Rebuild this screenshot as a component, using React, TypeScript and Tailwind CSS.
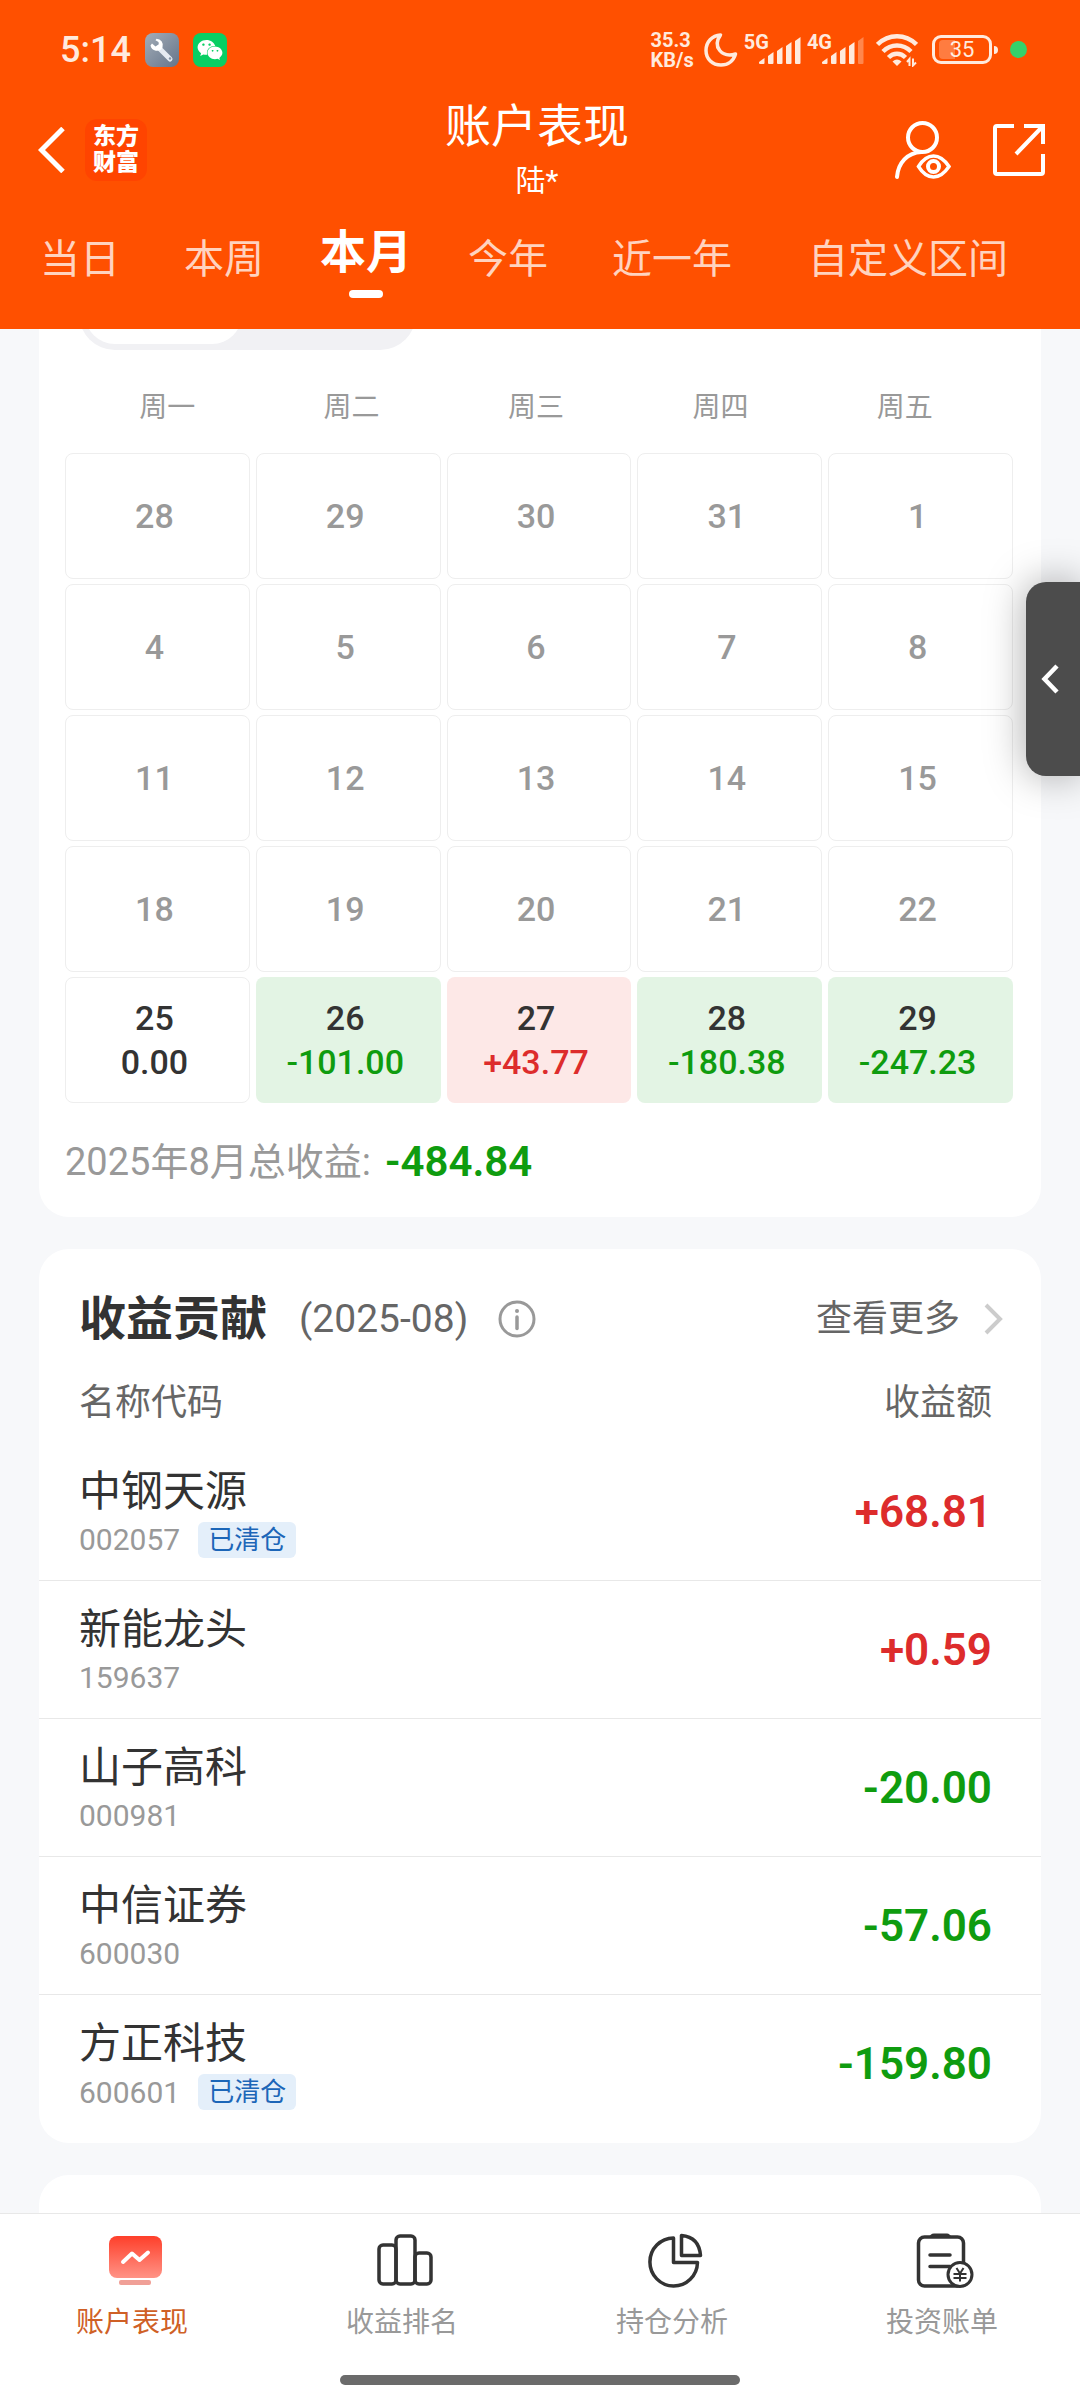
import { useState } from "react"
import type { ReactNode } from "react"
import clsx from "clsx"
import { FaWeixin } from "react-icons/fa"

const tabs = ["当日", "本周", "本月", "今年", "近一年", "自定义区间"]

const weekdays = ["周一", "周二", "周三", "周四", "周五"]

type Day = { day: number; profit?: string }

const days: Day[] = [
  ...[28, 29, 30, 31, 1, 4, 5, 6, 7, 8, 11, 12, 13, 14, 15, 18, 19, 20, 21, 22].map((day) => ({ day })),
  { day: 25, profit: "0.00" },
  { day: 26, profit: "-101.00" },
  { day: 27, profit: "+43.77" },
  { day: 28, profit: "-180.38" },
  { day: 29, profit: "-247.23" },
]

const stocks = [
  { name: "中钢天源", code: "002057", profit: "+68.81", closed: true },
  { name: "新能龙头", code: "159637", profit: "+0.59", closed: false },
  { name: "山子高科", code: "000981", profit: "-20.00", closed: false },
  { name: "中信证券", code: "600030", profit: "-57.06", closed: false },
  { name: "方正科技", code: "600601", profit: "-159.80", closed: true },
]

function profitColor(value: string) {
  if (value.startsWith("+")) return "text-[#dd2c2c]"
  if (value.startsWith("-")) return "text-[#0f9c0f]"
  return "text-[#333]"
}

function Signal({ label, level }: { label: string; level: number }) {
  const heights = [6, 12, 17, 22, 27]
  return (
    <div className="flex h-8 items-end">
      <span className="-mr-2.5 self-start text-[20px] leading-4 font-bold">{label}</span>
      <svg width="42" height="30" viewBox="0 0 42 30" fill="currentColor">
        {heights.map((h, i) => (
          <path
            key={h}
            d={`M${i * 9} ${28 - h + 4}l5.500 -4v${h - 1}q0 1 -1 1h-3.500q-1 0 -1 -1z`}
            opacity={i < level ? 1 : 0.35}
          />
        ))}
      </svg>
    </div>
  )
}

function StatusBar() {
  return (
    <div className="flex h-[99px] items-center justify-between pr-[53px] pl-[60px] text-[#ffeadd]">
      <div className="flex items-center gap-3.5">
        <span className="text-[36px] leading-none font-medium">5:14</span>
        <div className="flex size-[34px] items-center justify-center rounded-lg bg-gradient-to-br from-[#a3adb8] to-[#66758a]">
          <svg width="26" height="26" viewBox="0 0 26 26">
            <path d="M11 12L21 22" stroke="#e6ebf2" strokeWidth="5" strokeLinecap="round" />
            <path
              d="M7.500 1.800A6.500 6.500 0 0 1 13.500 10.500A6.500 6.500 0 0 1 1.500 8.500L3 6.500L6.500 9.500L9.800 7.200L9.500 5L6.500 3.200Z"
              fill="#fff"
            />
            <circle cx="21" cy="21.500" r="1.200" fill="#8493a5" />
          </svg>
        </div>
        <div className="flex size-[34px] items-center justify-center rounded-lg bg-[#07cf63] text-white">
          <FaWeixin className="size-[26px]" />
        </div>
      </div>

      <div className="flex items-center">
        <div className="mr-2.5 text-[20px] leading-5 font-bold">
          <div>35.3</div>
          <div>KB/s</div>
        </div>
        <svg className="mr-1.5" width="34" height="34" viewBox="0 0 34 34" fill="none" stroke="currentColor" strokeWidth="3.500" strokeLinejoin="round">
          <path d="M16.500 2C8 2.500 2 9 2 17.500C2 26 8.500 32 17 32C24 32 29.500 28 31.500 21C18 25 8 14 16.500 2Z" />
        </svg>
        <div className="mr-3 flex gap-1.5">
          <Signal label="5G" level={5} />
          <Signal label="4G" level={4} />
        </div>
        <svg className="mr-3.5" width="42" height="34" viewBox="0 0 42 34" fill="none" stroke="currentColor" strokeWidth="4.500">
          <path d="M1.500 11.500C12.500 0.500 29.500 0.500 40.500 11.500" />
          <path d="M7 18.500C15 10.500 27 10.500 35 18.500" />
          <path d="M12.500 24.500C17.500 19.500 24.500 19.500 29.500 24.500" />
          <path d="M21 33L16.500 28.500Q21 24.500 25.500 28.500Z" fill="currentColor" stroke="none" />
          <path d="M33.500 33V26L31 29M37 25.500V32.500L40 29.500" strokeWidth="2" />
        </svg>
        <div className="flex items-center gap-0.5">
          <div className="relative flex h-[29px] w-[60px] items-center justify-center rounded-[9px] border-[3px] border-current">
            <div className="absolute inset-y-0.5 left-1 w-4 rounded-l-sm bg-white/25" />
            <span className="text-[22px] leading-none">35</span>
          </div>
          <div className="h-2 w-1 rounded-r bg-current" />
        </div>
        <div className="ml-3 size-[17px] rounded-full bg-[#35d26a]" />
      </div>
    </div>
  )
}

function Header() {
  const [active, setActive] = useState("本月")

  return (
    <header className="bg-[#ff5000] text-white">
      <StatusBar />

      <div className="grid h-[102px] grid-cols-[1fr_auto_1fr] items-center pr-[34px] pl-[38px]">
        <div className="flex items-center gap-5">
          <button type="button" aria-label="返回">
            <svg width="27" height="46" viewBox="0 0 27 46" fill="none" stroke="currentColor" strokeWidth="5">
              <path d="M25 1.500L3.500 23L25 44.500" />
            </svg>
          </button>
          <div className="flex size-[62px] flex-col items-center justify-center rounded-xl bg-[#ff4400] text-[23px] leading-[26px] font-black">
            <span>东方</span>
            <span>财富</span>
          </div>
        </div>
        <div className="pr-2.5 text-center">
          <h1 className="text-[46px] leading-[54px]">账户表现</h1>
          <p className="mt-2 text-[30px] leading-10">陆*</p>
        </div>
        <div className="flex items-center justify-end gap-10">
          <button type="button" aria-label="隐私设置">
            <svg width="58" height="58" viewBox="0 0 58 58" fill="none" stroke="currentColor" strokeWidth="4" strokeLinecap="round">
              <circle cx="28.500" cy="16.500" r="14.500" />
              <path d="M3 56C4 42 13.500 31.500 27.500 31" />
              <path d="M24.500 45.500Q31 35 39.500 35T55 45.500Q48 56 39.500 56T24.500 45.500Z" strokeWidth="3.500" />
              <circle cx="39.500" cy="45.500" r="5.500" />
            </svg>
          </button>
          <button type="button" aria-label="分享">
            <svg width="54" height="54" viewBox="0 0 54 54" fill="none" stroke="currentColor" strokeWidth="4">
              <path d="M22 3H5Q3 3 3 5V49Q3 51 5 51H49Q51 51 51 49V31" />
              <path d="M32 3H51V21M24 31L51 3" />
            </svg>
          </button>
        </div>
      </div>

      <nav className="flex h-32 items-start pt-px pl-2 whitespace-nowrap">
        {tabs.map((tab) => (
          <button
            key={tab}
            type="button"
            onClick={() => setActive(tab)}
            className={clsx(
              "flex flex-col items-center leading-[60px]",
              tab === active ? "px-6 pt-5 text-[46px] font-bold" : "px-8 pt-7 text-[40px] text-white/75",
              tab === "自定义区间" && "ml-3",
            )}
          >
            {tab}
            {tab === active && <span className="mt-2 h-2 w-[34px] rounded-full bg-white" />}
          </button>
        ))}
      </nav>
    </header>
  )
}

function CalendarCard() {
  return (
    <section className="rounded-b-[30px] bg-white pr-7 pb-7 pl-[26px]">
      {/* 视图切换滑块，上半部分滚动到标题栏下方 */}
      <div className="flex h-[21px] items-end overflow-hidden pl-3.5">
        <div className="flex h-[72px] w-[337px] shrink-0 rounded-full bg-[#f1f1f4] p-1.5">
          <div className="w-[157px] rounded-full bg-white" />
        </div>
      </div>

      <div className="mt-[38px] grid grid-cols-5 pr-4 pl-2.5 text-center text-[28px] leading-10 text-[#999]">
        {weekdays.map((name) => (
          <div key={name}>{name}</div>
        ))}
      </div>

      <div className="mt-[25px] grid grid-cols-5 gap-x-1.5 gap-y-[5px]">
        {days.map(({ day, profit }, i) => (
          <div
            key={i}
            className={clsx(
              "flex h-[126px] flex-col items-center justify-center rounded-lg pr-1.5 text-[34px] leading-11 font-medium",
              !profit && "border border-[#eee] text-[#999]",
              profit === "0.00" && "border border-[#eee] text-[#333]",
              profit?.startsWith("-") && "bg-[#e3f4e4] text-[#333]",
              profit?.startsWith("+") && "bg-[#fde8e7] text-[#333]",
            )}
          >
            <span>{day}</span>
            {profit && <span className={profitColor(profit)}>{profit}</span>}
          </div>
        ))}
      </div>

      <p className="mt-8 flex items-center leading-[54px]">
        <span className="text-[38px] text-[#999]">2025年8月总收益:</span>
        <span className="ml-3.5 text-[42px] font-semibold text-[#0f9c0f]">-484.84</span>
      </p>
    </section>
  )
}

function ContributionCard() {
  return (
    <section className="rounded-[30px] bg-white pt-[26px] pb-2.5">
      <div className="flex h-[88px] items-center justify-between pr-[38px] pl-10">
        <div className="flex items-center">
          <h2 className="text-[47px] font-bold text-[#333]">收益贡献</h2>
          <span className="ml-8 text-[39px] text-[#666]">(2025-08)</span>
          <button type="button" aria-label="说明" className="ml-[30px]">
            <svg width="38" height="38" viewBox="0 0 38 38" fill="none" stroke="#999" strokeWidth="3">
              <circle cx="19" cy="19" r="17" />
              <path d="M19 17V28.500" strokeWidth="3.500" strokeLinecap="round" />
              <circle cx="19" cy="11" r="2" fill="#999" stroke="none" />
            </svg>
          </button>
        </div>
        <a href="#more" className="flex items-center gap-6 text-[36px] text-[#666]">
          查看更多
          <svg width="19" height="32" viewBox="0 0 19 32" fill="none" stroke="#ccc" strokeWidth="4">
            <path d="M2 2L16 16L2 30" />
          </svg>
        </a>
      </div>

      <table className="w-full border-separate border-spacing-0">
        <thead>
          <tr className="h-20 text-[36px] text-[#666]">
            <th className="pl-10 text-left font-normal">名称代码</th>
            <th className="pr-[49px] text-right font-normal">收益额</th>
          </tr>
        </thead>
        <tbody className="[&>tr:not(:last-child)>td]:border-b [&>tr>td]:border-[#e8e8e8]">
          {stocks.map((stock) => (
            <tr key={stock.code} className="h-[138px]">
              <td className="pt-1 pl-10">
                <div className="text-[42px] leading-[52px] text-[#333]">{stock.name}</div>
                <div className="flex h-11 items-center gap-[18px]">
                  <span className="text-[30px] text-[#999]">{stock.code}</span>
                  {stock.closed && (
                    <span className="rounded-md bg-[#e4effa] px-2.5 text-[26px] leading-9 text-[#1c66b8]">已清仓</span>
                  )}
                </div>
              </td>
              <td className={clsx("pr-[49px] text-right text-[44px] font-semibold", profitColor(stock.profit))}>
                {stock.profit}
              </td>
            </tr>
          ))}
        </tbody>
      </table>
    </section>
  )
}

function NavIcon({ children }: { children: ReactNode }) {
  return (
    <svg width="58" height="56" viewBox="0 0 58 56" fill="none" stroke="#333" strokeWidth="3.500" strokeLinejoin="round">
      {children}
    </svg>
  )
}

const navItems = [
  {
    label: "账户表现",
    icon: (
      <NavIcon>
        <defs>
          <linearGradient id="screen" x1="0" y1="0" x2="0" y2="1">
            <stop offset="0" stopColor="#fe3f2a" />
            <stop offset="1" stopColor="#ff9386" />
          </linearGradient>
        </defs>
        <rect x="3" y="3" width="53" height="42" rx="8" fill="url(#screen)" stroke="none" />
        <path d="M17 29L26 20.500L33.500 27L42 19.500" stroke="#fff" strokeWidth="4" strokeLinecap="round" />
        <rect x="13" y="47" width="32" height="5" rx="2" fill="#f0a097" stroke="none" />
      </NavIcon>
    ),
  },
  {
    label: "收益排名",
    icon: (
      <NavIcon>
        <rect x="3" y="12" width="17" height="39" rx="4" />
        <rect x="20" y="3" width="19" height="48" rx="4" />
        <rect x="39" y="20" width="16" height="31" rx="4" />
      </NavIcon>
    ),
  },
  {
    label: "持仓分析",
    icon: (
      <NavIcon>
        <path d="M27.500 5V29.500H51.500A23.800 24 0 1 1 27.500 5Z" />
        <path d="M35.500 2.500V22.500H54.500Q53 4 35.500 2.500Z" />
      </NavIcon>
    ),
  },
  {
    label: "投资账单",
    icon: (
      <NavIcon>
        <rect x="2.500" y="4" width="45" height="49" rx="6" />
        <path d="M13 5Q14 0.500 18 0.500H31Q34 0.500 36 5Z" fill="#333" stroke="none" />
        <path d="M14 22H34M14 33.500H34" strokeLinecap="round" />
        <circle cx="44" cy="41.500" r="12" fill="#fff" strokeWidth="3" />
        <path d="M40.500 35L44 40.500L47.500 35M44 40.500V48.500M37.500 41H50.500M37.500 45H50.500" strokeWidth="2" />
      </NavIcon>
    ),
  },
]

function BottomNav() {
  return (
    <footer className="border-t border-[#e8e8e8] bg-white pb-[15px]">
      <nav className="grid grid-cols-4 pt-[19px]">
        {navItems.map((item, i) => (
          <a key={item.label} href="#nav" className="flex flex-col items-center gap-3.5">
            {item.icon}
            <span className={clsx("pr-1.5 text-[28px] leading-10", i === 0 ? "text-[#cf6026]" : "text-[#999]")}>
              {item.label}
            </span>
          </a>
        ))}
      </nav>
      <div className="mx-auto mt-8 h-2.5 w-[400px] rounded-full bg-[#6b6b6b]" />
    </footer>
  )
}

export default function App() {
  return (
    <div className="relative flex min-h-screen flex-col overflow-hidden bg-[#f7f8fa] font-['Roboto','Noto_Sans_CJK_SC',sans-serif]">
      <Header />
      <main className="flex flex-1 flex-col gap-8 px-[39px]">
        <CalendarCard />
        <ContributionCard />
        <div className="flex-1 rounded-t-[30px] bg-white" />
      </main>
      <BottomNav />

      <button
        type="button"
        aria-label="展开侧栏"
        className="absolute top-[582px] right-0 flex h-[194px] w-[54px] items-center justify-center rounded-l-[20px] bg-[#4c4c4c] pr-1.5 text-white shadow-[0_0_40px_rgba(0,0,0,0.35)]"
      >
        <svg width="18" height="30" viewBox="0 0 18 30" fill="none" stroke="currentColor" strokeWidth="4.500">
          <path d="M16 2L3.500 15L16 28" />
        </svg>
      </button>
    </div>
  )
}
